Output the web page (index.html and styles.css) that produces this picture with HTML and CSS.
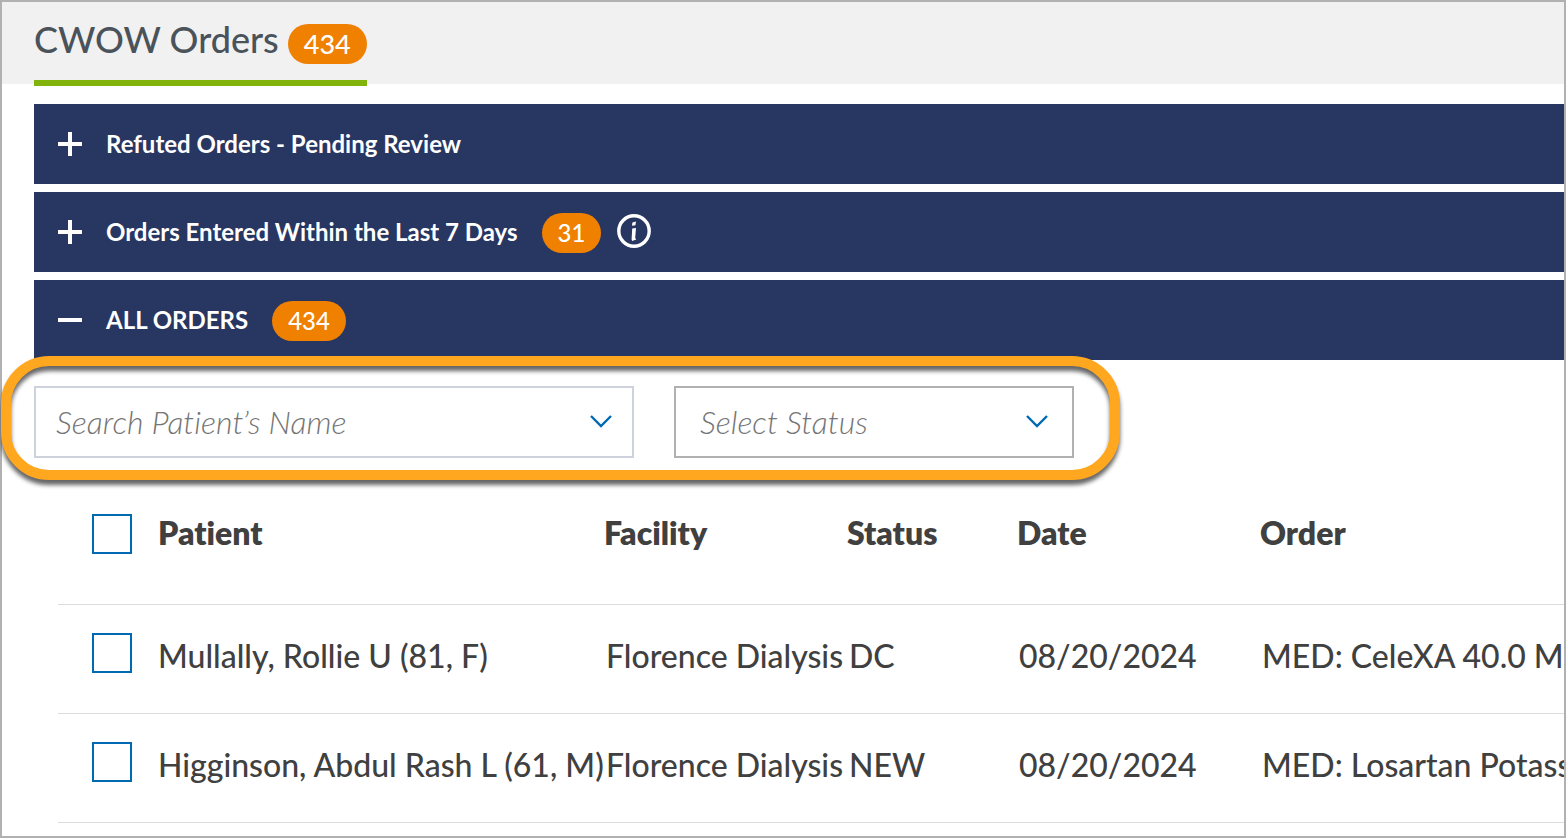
FILE: index.html
```html
<!DOCTYPE html>
<html lang="en">
<head>
  <meta charset="UTF-8" />
  <title>CWOW Orders</title>
  <meta name="viewport" content="width=device-width, initial-scale=1" />
  <link rel="stylesheet" href="styles.css">
</head>
<body>
  <div class="page">
    <header class="page-header">
      <h1 class="tab">CWOW Orders <span class="badge badge-large">434</span></h1>
    </header>

    <main>
      <div class="sections">
        <button class="section-bar" type="button" aria-expanded="false">
          <svg class="toggle-icon" viewBox="0 0 24 24"><path d="M0 12H24M12 0V24"/></svg>
          <span class="section-title">Refuted Orders - Pending Review</span>
        </button>
        <button class="section-bar" type="button" aria-expanded="false">
          <svg class="toggle-icon" viewBox="0 0 24 24"><path d="M0 12H24M12 0V24"/></svg>
          <span class="section-title">Orders Entered Within the Last 7 Days</span>
          <span class="badge">31</span>
          <svg class="info-icon" viewBox="0 0 34 34">
            <circle cx="17" cy="16" r="15.2"/>
            <path d="M15.4 7.4L19 6.6L18.4 10.2L15 10.8ZM15.2 13.6L19 13L18.2 22.8L19.2 24.4L15.2 26L14.6 24.6Z"/>
          </svg>
        </button>
        <button class="section-bar" type="button" aria-expanded="true">
          <svg class="toggle-icon" viewBox="0 0 24 24"><path d="M0 12H24"/></svg>
          <span class="section-title">ALL ORDERS</span>
          <span class="badge">434</span>
        </button>
      </div>

      <div class="filters">
        <div class="field field-name">
          <input type="text" placeholder="Search Patient’s Name" aria-label="Search Patient’s Name">
          <svg class="chevron" viewBox="0 0 22 14"><path d="M1 2L11 12L21 2"/></svg>
        </div>
        <div class="field field-status">
          <select aria-label="Select Status">
            <option>Select Status</option>
            <option>DC</option>
            <option>NEW</option>
          </select>
          <svg class="chevron" viewBox="0 0 22 14"><path d="M1 2L11 12L21 2"/></svg>
        </div>
        <div class="highlight"></div>
      </div>

      <table class="orders">
        <colgroup>
          <col class="col-check">
          <col class="col-patient">
          <col class="col-facility">
          <col class="col-status">
          <col class="col-date">
          <col>
        </colgroup>
        <thead>
          <tr>
            <th><input type="checkbox" aria-label="Select all orders"></th>
            <th>Patient</th>
            <th>Facility</th>
            <th>Status</th>
            <th>Date</th>
            <th>Order</th>
          </tr>
        </thead>
        <tbody>
          <tr>
            <td><input type="checkbox" aria-label="Select Mullally, Rollie U"></td>
            <td>Mullally, Rollie U (81, F)</td>
            <td>Florence Dialysis</td>
            <td>DC</td>
            <td>08/20/2024</td>
            <td>MED: CeleXA 40.0 Mi</td>
          </tr>
          <tr>
            <td><input type="checkbox" aria-label="Select Higginson, Abdul Rash L"></td>
            <td>Higginson, Abdul Rash L (61, M)</td>
            <td>Florence Dialysis</td>
            <td>NEW</td>
            <td>08/20/2024</td>
            <td>MED: Losartan Potass</td>
          </tr>
        </tbody>
      </table>
    </main>
  </div>
</body>
</html>
```
FILE: styles.css
```css
* {
  box-sizing: border-box;
}
body {
  margin: 0;
  background: #fff;
  color: #404040;
  font-family: Lato, 'Liberation Sans', sans-serif;
  font-weight: 500;
  font-variant-ligatures: none;
}
.page {
  min-height: 100vh;
  border: 2px solid #b1b1b1;
}
.page-header {
  display: flex;
  height: 82px;
  padding-left: 32px;
  background: #f1f1f1;
}
.tab {
  display: flex;
  align-items: flex-start;
  gap: 9px;
  height: 84px;
  margin: 0;
  padding-top: 16px;
  border-bottom: 6px solid #81b30a;
  color: #4a525a;
  font-size: 36px;
  font-weight: 500;
  line-height: 42px;
}
.badge {
  height: 40px;
  margin-top: 2px;
  padding: 0 16px;
  border-radius: 20px;
  background: #f08000;
  color: #fff;
  font-size: 24px;
  font-weight: 500;
  line-height: 40px;
}
.badge-large {
  margin-top: 6px;
  font-size: 27px;
}
.sections {
  display: flex;
  flex-direction: column;
  gap: 8px;
  margin-top: 20px;
  padding-left: 32px;
}
.section-bar {
  display: flex;
  align-items: center;
  gap: 24px;
  height: 80px;
  padding: 0 24px;
  border: none;
  background: #283662;
  color: #fff;
  font-family: inherit;
  font-size: 24px;
  font-weight: 700;
  text-align: left;
  cursor: pointer;
}
.section-title {
  padding-bottom: 2px;
}
.toggle-icon {
  width: 24px;
  height: 24px;
  fill: none;
  stroke: #fff;
  stroke-width: 4;
}
.info-icon {
  width: 34px;
  height: 34px;
  margin-left: -8px;
  overflow: visible;
}
.info-icon circle {
  fill: none;
  stroke: #fff;
  stroke-width: 3.4;
}
.info-icon path {
  fill: #fff;
}
.filters {
  position: relative;
  display: flex;
  gap: 40px;
  width: fit-content;
  margin: 26px 0 0 32px;
}
.field {
  position: relative;
}
.field-name {
  width: 600px;
}
.field-status {
  width: 400px;
}
.field input,
.field select {
  display: block;
  width: 100%;
  height: 72px;
  padding: 0 64px 2px 20px;
  border: 2px solid #cdd2dc;
  border-radius: 0;
  background: #fff;
  color: #757575;
  font-family: inherit;
  font-size: 32px;
  font-style: italic;
  font-weight: 300;
  font-variant-ligatures: none;
  appearance: none;
}
.field input::placeholder {
  color: #757575;
}
.field select {
  padding-left: 24px;
  border-color: #b1b1b1;
}
.chevron {
  position: absolute;
  top: 28px;
  right: 22px;
  width: 22px;
  height: 14px;
  fill: none;
  stroke: #0069b4;
  stroke-width: 2.4;
  pointer-events: none;
}
.field-status .chevron {
  right: 26px;
}
/* callout ring around both filters */
.highlight {
  position: absolute;
  inset: -30px -46px -22px -33px;
  border: 10px solid #ffa81f;
  border-radius: 48px;
  filter: drop-shadow(0 5px 2px rgba(0, 0, 0, 0.6));
  pointer-events: none;
}
.orders {
  width: calc(100% - 56px);
  margin: 6px 0 0 56px;
  border-collapse: separate;
  border-spacing: 0;
  table-layout: fixed;
  font-size: 32px;
  line-height: 38px;
}
.col-check {
  width: 100px;
}
.col-patient {
  width: 446px;
}
.col-facility,
.col-date {
  width: 243px;
}
.col-status {
  width: 170px;
}
.orders th,
.orders td {
  height: 109px;
  padding: 0;
  border-bottom: 1px solid #dcdcdc;
  overflow: hidden;
  text-align: left;
  vertical-align: top;
  white-space: nowrap;
}
.orders th {
  height: 141px;
  padding-top: 50px;
  font-weight: 800;
}
.orders td {
  padding-top: 32px;
}
.orders td:nth-child(n+3) {
  padding-left: 2px;
}
.orders th:first-child,
.orders td:first-child {
  padding-left: 34px;
}
.orders td:first-child {
  padding-top: 28px;
}
.orders input {
  display: block;
  width: 40px;
  height: 40px;
  margin: 0;
  border: 2px solid #0069b4;
  background: #fff;
  appearance: none;
}
.orders input:checked {
  background: #0069b4;
}
```
